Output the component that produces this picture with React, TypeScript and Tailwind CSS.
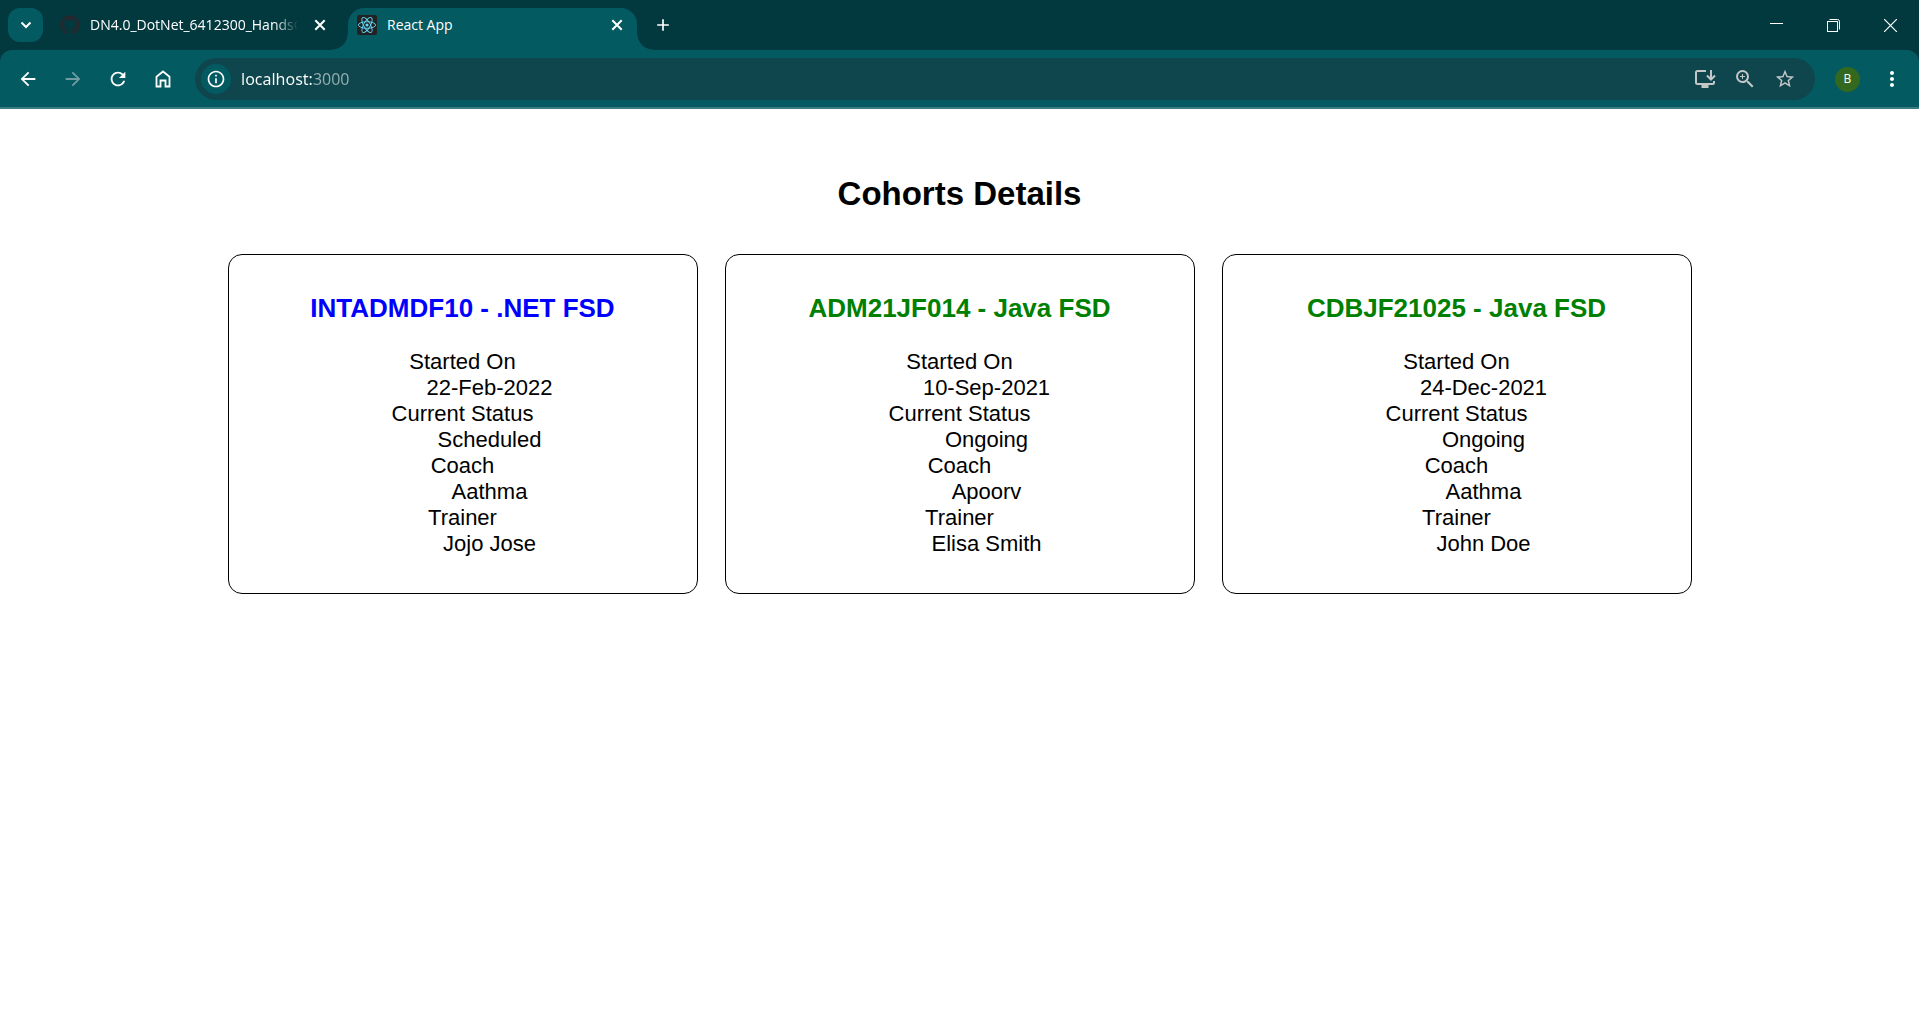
import type { ReactNode } from "react";
import {
  MdArrowBack,
  MdArrowForward,
  MdRefresh,
  MdInfoOutline,
  MdZoomIn,
  MdStarBorder,
  MdMoreVert,
  MdAdd,
} from "react-icons/md";
import { FaGithub } from "react-icons/fa";

type Cohort = {
  title: string;
  startedOn: string;
  status: string;
  coach: string;
  trainer: string;
};

const cohorts: Cohort[] = [
  { title: "INTADMDF10 - .NET FSD", startedOn: "22-Feb-2022", status: "Scheduled", coach: "Aathma", trainer: "Jojo Jose" },
  { title: "ADM21JF014 - Java FSD", startedOn: "10-Sep-2021", status: "Ongoing", coach: "Apoorv", trainer: "Elisa Smith" },
  { title: "CDBJF21025 - Java FSD", startedOn: "24-Dec-2021", status: "Ongoing", coach: "Aathma", trainer: "John Doe" },
];

function IconButton({ label, className, children }: { label: string; className: string; children: ReactNode }) {
  return (
    <button type="button" aria-label={label} className={`flex shrink-0 items-center justify-center ${className}`}>
      {children}
    </button>
  );
}

function ReactIcon() {
  return (
    <svg viewBox="0 0 20 20" className="size-5 shrink-0" aria-hidden="true">
      <rect width="20" height="20" rx="2" fill="#222" />
      <g fill="none" stroke="#61dafb" strokeWidth="0.9">
        <ellipse cx="10" cy="10" rx="8.6" ry="3.3" />
        <ellipse cx="10" cy="10" rx="8.6" ry="3.3" transform="rotate(60 10 10)" />
        <ellipse cx="10" cy="10" rx="8.6" ry="3.3" transform="rotate(120 10 10)" />
      </g>
      <circle cx="10" cy="10" r="1.6" fill="#61dafb" />
    </svg>
  );
}

function CloseIcon() {
  return (
    <svg viewBox="0 0 12 12" className="size-3" stroke="currentColor" strokeWidth="2" aria-hidden="true">
      <path d="M1.300 1.300l9.400 9.400M10.700 1.300l-9.400 9.400" />
    </svg>
  );
}

function InstallIcon() {
  return (
    <svg viewBox="0 0 22 20" className="h-5 w-[22px]" fill="none" stroke="currentColor" strokeWidth="2" aria-hidden="true">
      <path d="M12 2H3.500A1.500 1.500 0 0 0 2 3.500v10A1.500 1.500 0 0 0 3.500 15h15a1.500 1.500 0 0 0 1.500-1.500V12" />
      <path d="M17 1v9M13 6.500l4 4 4-4" />
      <path d="M7.500 17.500h7" strokeWidth="3" />
    </svg>
  );
}

function TabStrip() {
  return (
    <div className="flex h-[50px] items-end bg-[#02393f] font-['Open_Sans','Noto_Sans',sans-serif] text-sm text-white">
      <div className="flex h-[50px] items-start pt-2 pl-2">
        <IconButton label="Search tabs" className="h-[34px] w-[35px] rounded-xl bg-[#045a61]">
          <svg viewBox="0 0 12 8" className="h-2 w-3" fill="none" stroke="currentColor" strokeWidth="2" aria-hidden="true">
            <path d="M1.500 1.500 6 6l4.500-4.500" />
          </svg>
        </IconButton>
      </div>
      <div className="flex h-[50px] w-[305px] items-center pr-4 pl-[17px]">
        <FaGithub className="size-5 shrink-0 text-[#24292f]" />
        <span className="ml-[10px] w-[210px] overflow-hidden whitespace-nowrap [mask-image:linear-gradient(90deg,#000_184px,transparent)]">
          DN4.0_DotNet_6412300_HandsO
        </span>
        <IconButton label="Close DN4.0 tab" className="ml-[10px] size-6">
          <CloseIcon />
        </IconButton>
      </div>
      <div className="relative flex h-[42px] w-[289px] items-center rounded-t-2xl bg-[#045a61] pb-2 pl-[9px] before:absolute before:bottom-0 before:-left-4 before:size-4 before:bg-[radial-gradient(circle_at_0_0,transparent_15px,#045a61_16px)] after:absolute after:-right-4 after:bottom-0 after:size-4 after:bg-[radial-gradient(circle_at_100%_0,transparent_15px,#045a61_16px)]">
        <ReactIcon />
        <span className="ml-[10px] grow">React App</span>
        <IconButton label="Close React App tab" className="mr-2 size-6">
          <CloseIcon />
        </IconButton>
      </div>
      <IconButton label="New tab" className="ml-[14px] h-[50px] w-6">
        <MdAdd className="size-5" />
      </IconButton>
      <div className="ml-auto flex h-[50px]">
        <IconButton label="Minimize" className="h-12 w-[57px]">
          <svg viewBox="0 0 13 13" className="size-[13px]" stroke="currentColor" aria-hidden="true">
            <path d="M0 5.500h13" />
          </svg>
        </IconButton>
        <IconButton label="Restore" className="h-[50px] w-[57px]">
          <svg viewBox="0 0 13 13" className="size-[13px]" fill="none" stroke="currentColor" aria-hidden="true">
            <rect x="0.500" y="2.500" width="10" height="10" />
            <path d="M2.500.500h8a2 2 0 0 1 2 2v8" />
          </svg>
        </IconButton>
        <IconButton label="Close window" className="h-[50px] w-[57px]">
          <svg viewBox="0 0 13 13" className="size-[13px]" stroke="currentColor" strokeWidth="1.2" aria-hidden="true">
            <path d="M0 0l13 13M13 0 0 13" />
          </svg>
        </IconButton>
      </div>
    </div>
  );
}

function Toolbar() {
  return (
    <div className="bg-[#02393f]">
      <div className="flex h-[59px] items-center rounded-t-xl border-b-2 border-[#3b7d82] bg-[#045a61] pt-px text-white">
        <div className="flex gap-[21px] pl-4">
          <IconButton label="Back" className="size-6">
            <MdArrowBack className="size-[22px]" />
          </IconButton>
          <IconButton label="Forward" className="size-6 text-[#6f9da1]">
            <MdArrowForward className="size-[22px]" />
          </IconButton>
          <IconButton label="Reload" className="size-6">
            <MdRefresh className="size-[22px]" />
          </IconButton>
          <IconButton label="Home" className="size-6">
            <svg viewBox="0 0 16 18" className="h-[18px] w-4" fill="none" stroke="currentColor" strokeWidth="1.800" aria-hidden="true">
              <path d="M1.500 16.500V6.800L8 1.500l6.500 5.300v9.700h-4v-6h-5v6z" />
            </svg>
          </IconButton>
        </div>
        <div className="ml-5 flex h-[42px] grow items-center rounded-full bg-[#0f464d] pr-[18px] pl-[6px]">
          <IconButton label="View site information" className="size-[30px] rounded-full bg-[#045a61]">
            <MdInfoOutline className="size-5" />
          </IconButton>
          <input
            aria-label="Address"
            defaultValue="localhost:3000"
            className="ml-[10px] min-w-0 grow bg-[linear-gradient(90deg,#fff_73px,#93aeb1_73px)] bg-clip-text font-['Noto_Sans','Open_Sans',sans-serif] text-base text-transparent outline-none"
          />
          <div className="flex gap-4 text-[#c4c7c8]">
            <IconButton label="Install app" className="size-6">
              <InstallIcon />
            </IconButton>
            <IconButton label="Zoom" className="size-6">
              <MdZoomIn className="size-6" />
            </IconButton>
            <IconButton label="Bookmark this page" className="size-6">
              <MdStarBorder className="size-[22px]" />
            </IconButton>
          </div>
        </div>
        <IconButton label="Profile" className="ml-5 size-[25px] rounded-full bg-[#33691e] font-['Open_Sans',sans-serif] text-xs">
          B
        </IconButton>
        <IconButton label="Menu" className="mr-[15px] ml-5 size-6">
          <MdMoreVert className="size-6" />
        </IconButton>
      </div>
    </div>
  );
}

function CohortCard({ cohort }: { cohort: Cohort }) {
  const rows = [
    ["Started On", cohort.startedOn],
    ["Current Status", cohort.status],
    ["Coach", cohort.coach],
    ["Trainer", cohort.trainer],
  ];
  return (
    <article className="w-[470px] rounded-[14px] border border-black px-4 pt-[38px] pb-9">
      <h3 className={`text-[26px] leading-[30px] font-bold ${cohort.status === "Ongoing" ? "text-[#008000]" : "text-[#0000ff]"}`}>
        {cohort.title}
      </h3>
      <dl className="mt-[26px] text-[22px] leading-[26px]">
        {rows.map(([label, value]) => (
          <div key={label}>
            <dt>{label}</dt>
            <dd className="ml-[54px]">{value}</dd>
          </div>
        ))}
      </dl>
    </article>
  );
}

export default function App() {
  return (
    <div className="min-h-screen bg-white">
      <header>
        <TabStrip />
        <Toolbar />
      </header>
      <main className="px-6 pt-[66px] text-center font-['Liberation_Sans',Arial,sans-serif] text-black">
        <h1 className="text-[33px] leading-[38px] font-bold">Cohorts Details</h1>
        <div className="mt-[41px] flex flex-wrap justify-center gap-[27px]">
          {cohorts.map((cohort) => (
            <CohortCard key={cohort.title} cohort={cohort} />
          ))}
        </div>
      </main>
    </div>
  );
}
